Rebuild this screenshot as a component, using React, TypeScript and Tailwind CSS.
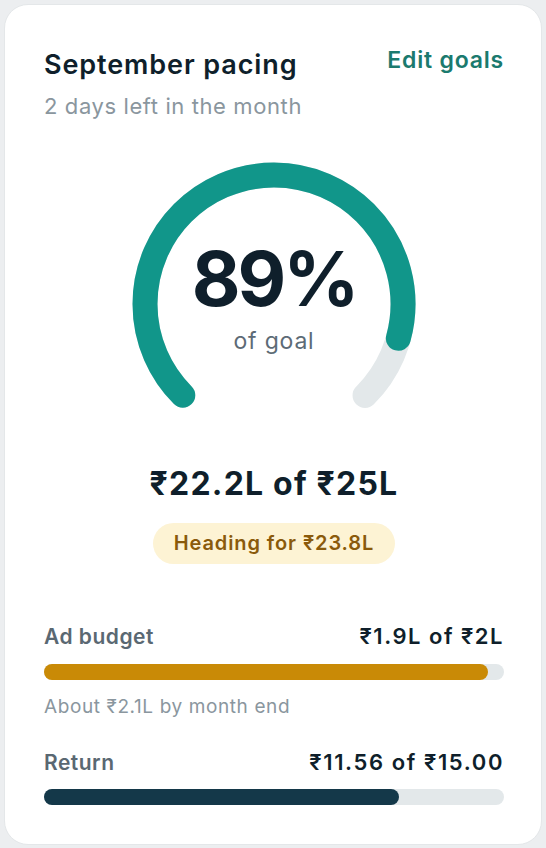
const R = 129;
const C = 2 * Math.PI * R;
const TRACK = C * 0.75;

const Gauge = ({ pct }: { pct: number }) => {
  const fill = TRACK * pct;
  return (
    <div className="relative mx-auto w-[290px] h-[290px]">
      <svg width="290" height="290" viewBox="0 0 290 290">
        <circle
          cx="145"
          cy="145"
          r={R}
          fill="none"
          stroke="#e3e8ea"
          strokeWidth="25"
          strokeLinecap="round"
          strokeDasharray={`${TRACK} ${C}`}
          transform="rotate(135 145 145)"
        />
        <circle
          cx="145"
          cy="145"
          r={R}
          fill="none"
          stroke="#11968a"
          strokeWidth="25"
          strokeLinecap="round"
          strokeDasharray={`${fill} ${C}`}
          transform="rotate(135 145 145)"
        />
      </svg>
      <div className="absolute inset-0 flex flex-col items-center pt-[82px]">
        <span className="text-[75px] leading-none font-bold tracking-[-3px] text-[#0f1f2b]">89%</span>
        <span className="mt-[14px] text-[23px] leading-none tracking-[0.8px] text-[#5d6b76]">of goal</span>
      </div>
    </div>
  );
};

const Bar = ({ pct, color }: { pct: number; color: string }) => (
  <div className="h-4 w-full rounded-full bg-[#e3e8ea]">
    <div className={`h-4 rounded-full ${color}`} style={{ width: `${pct}%` }} />
  </div>
);

export default function App() {
  return (
    <div
      className="min-h-[848px] bg-[#eceef0] p-1 pb-[5px]"
      style={{ fontFamily: "Inter, 'Noto Sans', sans-serif" }}
    >
      <div className="rounded-[24px] border border-[#e4e7e9] bg-white pl-[39px] pr-[37px] pt-[44px] pb-[39px]">
        <div className="flex items-start justify-between">
          <div>
            <h2 className="text-[27px] leading-[32px] font-semibold tracking-[0.9px] text-[#0f1f2b]">
              September pacing
            </h2>
            <p className="mt-[12px] text-[22px] leading-[26px] tracking-[0.6px] text-[#8a969e]">
              2 days left in the month
            </p>
          </div>
          <button className="mt-[-3px] text-[23px] leading-[28px] font-semibold tracking-[0.8px] text-[#1b7a6e]">
            Edit goals
          </button>
        </div>

        <div className="mt-[40px]">
          <Gauge pct={0.89} />
        </div>

        <div className="mt-[17px] text-center text-[32px] leading-[36px] font-bold tracking-[1.2px] text-[#0f1f2b]">
          ₹22.2L of ₹25L
        </div>
        <div className="mt-[21px] flex justify-center">
          <span className="rounded-full bg-[#fdf3d4] px-[21px] py-[7px] text-[20px] leading-[27px] font-semibold tracking-[0.9px] text-[#8a5a0b]">
            Heading for ₹23.8L
          </span>
        </div>

        <div className="mt-[58px]">
          <div className="flex items-baseline justify-between">
            <span className="text-[21px] leading-[28px] font-semibold tracking-[0.5px] text-[#5a6872]">Ad budget</span>
            <span className="text-[22px] leading-[28px] font-semibold tracking-[1.5px] text-[#0f1f2b]">
              ₹1.9L of ₹2L
            </span>
          </div>
          <div className="mt-[13px]">
            <Bar pct={96.5} color="bg-[#c98a06]" />
          </div>
          <p className="mt-[14px] text-[19px] leading-[26px] tracking-[0.6px] text-[#8a969e]">
            About ₹2.1L by month end
          </p>
        </div>

        <div className="mt-[28px]">
          <div className="flex items-baseline justify-between">
            <span className="text-[21px] leading-[28px] font-semibold tracking-[0.5px] text-[#5a6872]">Return</span>
            <span className="text-[22px] leading-[28px] font-semibold tracking-[1.6px] text-[#0f1f2b]">
              ₹11.56 of ₹15.00
            </span>
          </div>
          <div className="mt-[12px]">
            <Bar pct={77.07} color="bg-[#143849]" />
          </div>
        </div>
      </div>
    </div>
  );
}
